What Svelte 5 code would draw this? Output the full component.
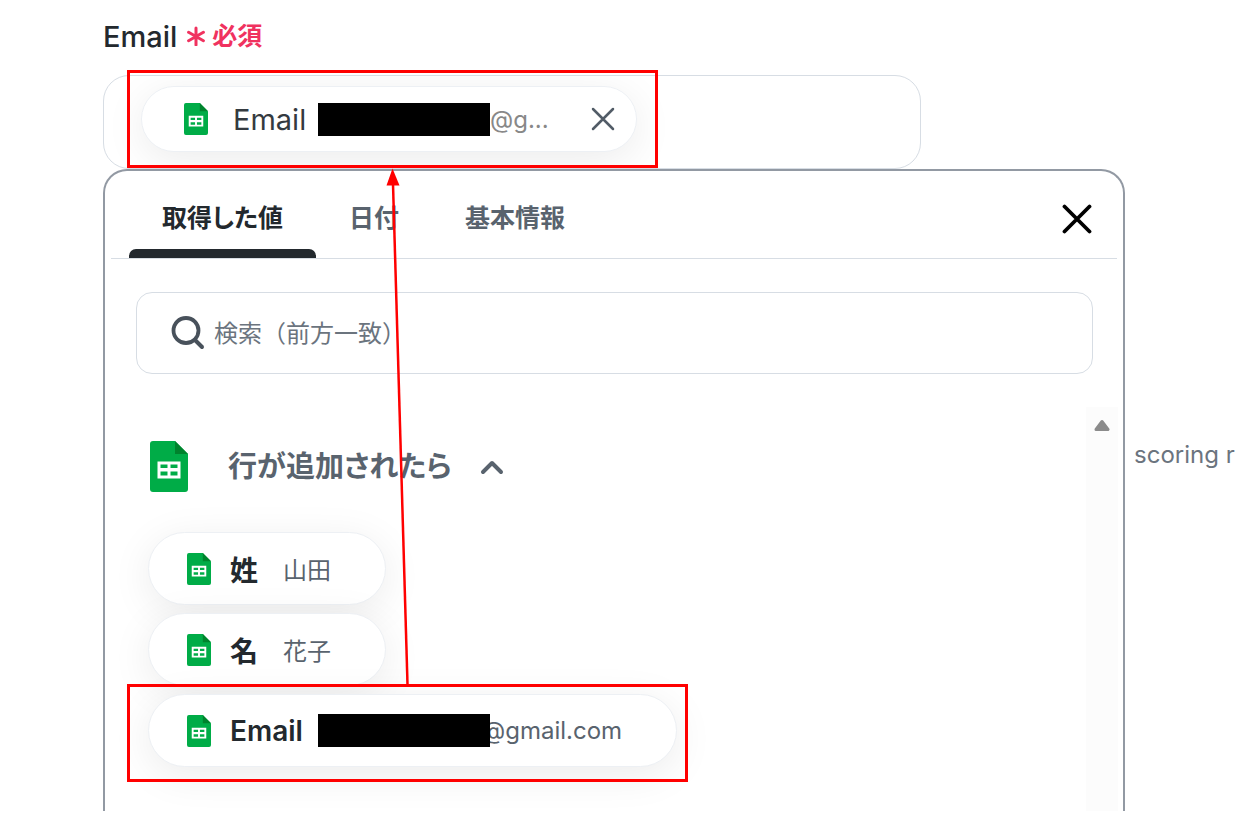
<script lang="ts">
  type Item = { label: string; value: string; masked?: boolean };

  const tabs = ['取得した値', '日付', '基本情報'];
  const items: Item[] = [
    { label: '姓', value: '山田' },
    { label: '名', value: '花子' },
    { label: 'Email', value: '@gmail.com', masked: true },
  ];

  let activeTab = $state(0);
  let query = $state('');
  let expanded = $state(true);
</script>

{#snippet sheetIcon(size: string)}
  <svg class="sheet {size}" viewBox="0 0 38 51" preserveAspectRatio="none" aria-hidden="true">
    <path d="M3 0h22l13 13v35a3 3 0 0 1-3 3H3a3 3 0 0 1-3-3V3a3 3 0 0 1 3-3z" fill="#00ac47" />
    <path d="M25 0l13 13H25z" fill="#00832d" />
    <path
      d="M7.500 20.500h23v17h-23zM10.500 23.500v3.500h7v-3.500zM20.500 23.500v3.500h7v-3.500zM10.500 30.500v4h7v-4zM20.500 30.500v4h7v-4z"
      fill="#fff"
      fill-rule="evenodd"
    />
  </svg>
{/snippet}

<div class="page">
  <main>
    <div class="field-label">
      <span id="email-label">Email</span>
      <span class="required">
        <svg width="20" height="20" viewBox="0 0 20 20" aria-hidden="true">
          <path d="M10 2v17M2.600 6.300l14.800 8.400M17.400 6.300L2.600 14.700" stroke="currentColor" stroke-width="3" stroke-linecap="round" />
        </svg>
        必須
      </span>
    </div>

    <div class="field" role="group" aria-labelledby="email-label">
      <div class="token">
        {@render sheetIcon('small')}
        <span class="token-label">Email</span>
        <span class="mask"></span>
        <span class="token-value">@g...</span>
        <button class="token-remove" aria-label="削除">
          <svg width="24" height="24" viewBox="0 0 24 24" aria-hidden="true">
            <path d="M2 2l20 20M22 2L2 22" stroke="currentColor" stroke-width="2.500" stroke-linecap="round" />
          </svg>
        </button>
      </div>
    </div>

    <section class="panel">
      <header>
        <div class="tabs" role="tablist">
          {#each tabs as tab, i}
            <button
              class="tab"
              class:active={activeTab === i}
              role="tab"
              aria-selected={activeTab === i}
              onclick={() => (activeTab = i)}
            >
              <span class="tab-name">{tab}</span>
              <span class="tab-bar"></span>
            </button>
          {/each}
        </div>
        <button class="close" aria-label="閉じる">
          <svg width="30" height="30" viewBox="0 0 30 30" aria-hidden="true">
            <path d="M2.500 2.500l25 25M27.500 2.500l-25 25" stroke="#000" stroke-width="3.800" stroke-linecap="round" />
          </svg>
        </button>
      </header>

      <label class="search">
        <svg width="34" height="34" viewBox="0 0 34 34" fill="none" aria-hidden="true">
          <circle cx="15" cy="14.500" r="12.500" stroke="#48515b" stroke-width="3.800" />
          <path d="M24 24l7 7" stroke="#48515b" stroke-width="4" stroke-linecap="round" />
        </svg>
        <input type="text" placeholder="検索（前方一致）" aria-label="検索" bind:value={query} />
      </label>

      <div class="list">
        <div class="list-body">
          <button class="group" aria-expanded={expanded} onclick={() => (expanded = !expanded)}>
            {@render sheetIcon('large')}
            <span class="group-name">行が追加されたら</span>
            <svg class:flipped={!expanded} width="24" height="16" viewBox="0 0 24 16" fill="none" aria-hidden="true">
              <path d="M3 13l9-9 9 9" stroke="currentColor" stroke-width="4" stroke-linecap="round" stroke-linejoin="round" />
            </svg>
          </button>
          {#if expanded}
            <div class="chips">
              {#each items as item}
                <button class="chip">
                  {@render sheetIcon('small')}
                  <span class="chip-label" class:latin={item.masked}>{item.label}</span>
                  {#if item.masked}<span class="mask"></span>{/if}
                  <span class="chip-value" class:tucked={item.masked}>{item.value}</span>
                </button>
              {/each}
            </div>
          {/if}
        </div>
        <div class="scrollbar">
          <svg width="16" height="13" viewBox="0 0 16 13" aria-hidden="true">
            <path d="M8 2.500L14 10.500H2z" fill="#8b8b8b" stroke="#8b8b8b" stroke-width="3" stroke-linejoin="round" />
          </svg>
        </div>
      </div>
    </section>
  </main>

  <aside>scoring r</aside>

  <!-- red callouts linking the chosen item to the field -->
  <svg class="callouts" width="700" height="800" fill="none" aria-hidden="true">
    <rect x="128.500" y="71.500" width="528" height="95" stroke="#f00" stroke-width="3" />
    <rect x="128.500" y="685.500" width="558" height="95" stroke="#f00" stroke-width="3" />
    <path d="M407.500 684L393 184" stroke="#f00" stroke-width="2.500" />
    <path d="M392.500 168.500l7 17h-13z" fill="#f00" />
  </svg>
</div>

<style>
  :global(body) {
    margin: 0;
    background: #fff;
  }

  .page {
    position: relative;
    display: grid;
    grid-template-columns: minmax(0, 1fr) 111px;
    padding: 18px 0 5px 103px;
    overflow: hidden;
    font-family: Inter, 'Noto Sans CJK JP', sans-serif;
    color: #23292e;
  }

  button {
    padding: 0;
    border: 0;
    background: none;
    font: inherit;
    color: inherit;
    cursor: pointer;
  }
  svg {
    display: block;
    flex: none;
  }

  .sheet.small {
    width: 24px;
    height: 32px;
  }
  .sheet.large {
    width: 38px;
    height: 51px;
  }

  .field-label {
    display: flex;
    align-items: center;
    gap: 9px;
    height: 36px;
    margin-bottom: 21px;
    font-size: 29px;
    font-weight: 500;
  }
  .required {
    display: flex;
    align-items: center;
    gap: 6px;
    font-size: 25px;
    font-weight: 700;
    line-height: 32px;
    color: #f0325f;
  }

  .field {
    display: flex;
    box-sizing: border-box;
    width: 80%;
    padding: 10px 37px 16px;
    border: 1px solid #d7dde4;
    border-radius: 26px;
    overflow: hidden;
  }
  .token,
  .chip {
    display: flex;
    align-items: center;
    box-sizing: border-box;
    background: #fff;
    border: 1px solid #edf0f4;
    border-radius: 40px;
    box-shadow: 0 8px 40px rgba(0, 0, 0, 0.08);
    white-space: nowrap;
  }
  .token {
    height: 66px;
    padding: 0 21px 0 42px;
  }
  .token-label {
    width: 85px;
    margin-left: 25px;
    font-size: 29px;
    color: #343a40;
  }
  .mask {
    z-index: 1;
    width: 172px;
    height: 33px;
    background: #000;
  }
  .token-value {
    width: 101px;
    font-size: 24px;
    color: #888;
  }
  .token-remove {
    color: #525c67;
  }

  .panel {
    border: 2px solid #9299a3;
    border-bottom: 0;
    border-radius: 24px 24px 0 0;
    background: #fff;
  }
  header {
    display: flex;
    justify-content: space-between;
    height: 87px;
    margin: 0 6px;
    padding: 0 25px 0 18px;
    border-bottom: 1px solid #d7dde4;
  }
  .tabs {
    display: flex;
  }
  .tab {
    display: flex;
    flex-direction: column;
    font-size: 25px;
    font-weight: 700;
    font-feature-settings: 'palt';
    color: #59636e;
  }
  .tab-name {
    padding: 8px 33px 0;
    line-height: 78px;
    height: 70px;
  }
  .tab-bar {
    width: 100%;
    height: 9px;
    border-radius: 7px 7px 0 0;
  }
  .tab.active {
    color: #23292e;
  }
  .tab.active .tab-bar {
    background: #23292e;
  }
  .close {
    padding-top: 8px;
  }

  .search {
    display: flex;
    align-items: center;
    gap: 9px;
    box-sizing: border-box;
    height: 82px;
    margin: 33px 30px 33px 31px;
    padding: 0 34px;
    border: 1px solid #d7dde4;
    border-radius: 16px;
  }
  .search input {
    flex: 1;
    min-width: 0;
    padding: 0;
    border: 0;
    outline: 0;
    font: inherit;
    font-size: 24px;
    color: #23292e;
  }
  .search input::placeholder {
    color: #6b747e;
    opacity: 1;
  }

  .list {
    display: flex;
    margin-right: 5px;
  }
  .list-body {
    flex: 1;
    padding: 34px 0 44px 43px;
  }
  .group {
    display: flex;
    align-items: center;
    margin-bottom: 40px;
    padding-left: 2px;
    color: #59636e;
  }
  .group-name {
    margin: 0 28px 0 40px;
    font-size: 29px;
    font-weight: 700;
    line-height: 48px;
    font-feature-settings: 'palt';
  }
  .flipped {
    transform: rotate(180deg);
  }
  .chips {
    display: flex;
    flex-direction: column;
    align-items: flex-start;
    gap: 8px;
  }
  .chip {
    height: 73px;
    padding: 0 54px 0 38px;
  }
  .chip-label {
    margin: 0 25px 0 19px;
    font-size: 28px;
    font-weight: 700;
  }
  .chip-label.latin {
    width: 88px;
    margin-right: 0;
    font-weight: 600;
    text-align: left;
  }
  .chip-value {
    font-size: 24px;
    color: #59636e;
  }
  .chip-value.tucked {
    margin-left: -8px;
  }
  .scrollbar {
    display: flex;
    justify-content: center;
    width: 32px;
    padding-top: 12px;
    box-sizing: border-box;
    background: #fcfcfc;
  }

  aside {
    padding: 422px 0 0 9px;
    font-size: 24px;
    line-height: 30px;
    color: #6b747e;
    white-space: nowrap;
  }

  .callouts {
    position: absolute;
    top: 0;
    left: 0;
    z-index: 2;
    pointer-events: none;
  }
</style>
